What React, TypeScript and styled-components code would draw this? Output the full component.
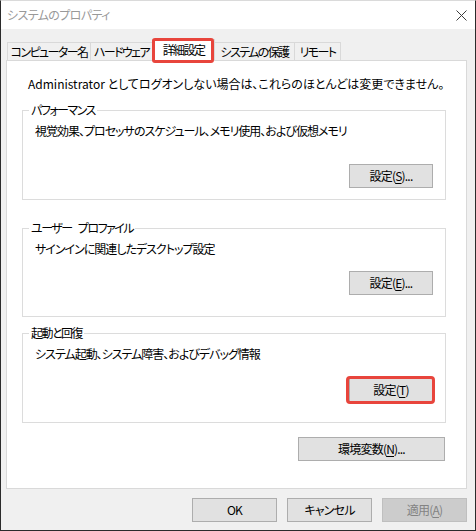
import React from "react";
import styled, { createGlobalStyle } from "styled-components";

const GlobalStyle = createGlobalStyle`
  html, body {
    margin: 0;
    padding: 0;
    background: #ffffff;
  }
  body {
    font-family: "Noto Sans CJK JP", "Noto Sans", sans-serif;
    font-size: 12px;
    font-feature-settings: "palt";
    color: #000;
  }
`;

const Window = styled.div`
  width: 476px;
  height: 531px;
  box-sizing: border-box;
  border: 1px solid #2b2b2b;
  border-top-color: #dadada;
  display: flex;
  flex-direction: column;
  background: #f0f0f0;
  overflow: hidden;
`;

const TitleBar = styled.div`
  height: 28px;
  flex: none;
  background: #ffffff;
  display: flex;
  align-items: center;
  justify-content: space-between;
  padding: 0 8px 0 6px;
  color: #999999;
  line-height: 16px;
  letter-spacing: -0.6px;
`;

const Body = styled.div`
  flex: 1;
  display: flex;
  flex-direction: column;
  padding: 10px 8px 0 5px;
`;

const TabRow = styled.div`
  height: 22px;
  flex: none;
  display: flex;
  align-items: flex-start;
  padding-left: 1px;
  position: relative;
  z-index: 1;
`;

const Tab = styled.div<{ $w: number; $active?: boolean }>`
  width: ${(p) => p.$w}px;
  box-sizing: border-box;
  margin-left: -1px;
  margin-top: ${(p) => (p.$active ? 0 : 3)}px;
  height: ${(p) => (p.$active ? 22 : 19)}px;
  border: 1px solid #d9d9d9;
  border-bottom: ${(p) => (p.$active ? "none" : "1px solid #d9d9d9")};
  background: ${(p) => (p.$active ? "#ffffff" : "#f0f0f0")};
  display: flex;
  align-items: center;
  justify-content: center;
  padding-bottom: ${(p) => (p.$active ? 2 : 0)}px;
  line-height: 16px;
  white-space: nowrap;
  letter-spacing: -1.6px;
  position: relative;
  &:first-child {
    margin-left: 0;
  }
`;

const Highlight = styled.div`
  position: absolute;
  left: -1px;
  right: 0px;
  top: -2px;
  bottom: -2px;
  border: 3px solid #e8453c;
  border-radius: 3px;
  pointer-events: none;
`;

const Panel = styled.div`
  height: 429px;
  flex: none;
  box-sizing: border-box;
  margin-top: -1px;
  background: #ffffff;
  border: 1px solid #d9d9d9;
  padding: 15px 20px 0 15px;
  display: flex;
  flex-direction: column;
`;

const Intro = styled.div`
  line-height: 16px;
  padding-left: 6px;
  white-space: nowrap;
`;

const Group = styled.div<{ $top: number; $gap: number; $bottom: number }>`
  position: relative;
  margin-top: ${(p) => p.$top}px;
  border: 1px solid #dcdcdc;
  padding: 12px 12px ${(p) => p.$bottom}px 12px;
  display: flex;
  flex-direction: column;

  > button {
    align-self: flex-end;
    margin-top: ${(p) => p.$gap}px;
  }
`;

const Legend = styled.div`
  position: absolute;
  left: 6px;
  top: -9px;
  padding: 0 2px;
  background: #ffffff;
  line-height: 16px;
  letter-spacing: -1.5px;
  word-spacing: 5px;
  white-space: pre;
`;

const Description = styled.div`
  line-height: 16px;
  letter-spacing: -1px;
  white-space: nowrap;
`;

const Button = styled.button<{ $w: number; $disabled?: boolean }>`
  width: ${(p) => p.$w}px;
  height: 24px;
  flex: none;
  box-sizing: border-box;
  position: relative;
  border: 1px solid ${(p) => (p.$disabled ? "#bfbfbf" : "#adadad")};
  background: ${(p) => (p.$disabled ? "#cccccc" : "#e1e1e1")};
  color: ${(p) => (p.$disabled ? "#838383" : "#000")};
  font: inherit;
  line-height: 16px;
  letter-spacing: -0.8px;
  white-space: nowrap;
  padding: 0;
  display: flex;
  align-items: center;
  justify-content: center;
  u {
    text-decoration: underline;
    text-underline-offset: 2px;
  }
`;

const ButtonHighlight = styled.div`
  position: absolute;
  left: -4px;
  right: -3px;
  top: -3px;
  bottom: -3px;
  border: 3px solid #e8453c;
  border-radius: 4px;
  pointer-events: none;
`;

const EnvRow = styled.div`
  display: flex;
  justify-content: flex-end;
  margin-top: 14px;
  margin-right: 1px;
`;

const Footer = styled.div`
  display: flex;
  justify-content: flex-end;
  gap: 10px;
  padding: 9px 0 0;
`;

function CloseIcon() {
  return (
    <svg width="11" height="11" viewBox="0 0 11 11">
      <path d="M0.5 0.5 L10.5 10.5 M10.5 0.5 L0.5 10.5" stroke="#3c3c3c" strokeWidth="1" fill="none" />
    </svg>
  );
}

export default function App() {
  return (
    <>
      <GlobalStyle />
      <Window>
        <TitleBar>
          <span>システムのプロパティ</span>
          <CloseIcon />
        </TitleBar>
        <Body>
          <TabRow>
            <Tab $w={84}>コンピューター名</Tab>
            <Tab $w={63}>ハードウェア</Tab>
            <Tab $w={63} $active>
              詳細設定
              <Highlight />
            </Tab>
            <Tab $w={81}>システムの保護</Tab>
            <Tab $w={47}>リモート</Tab>
          </TabRow>
          <Panel>
            <Intro>Administrator としてログオンしない場合は、これらのほとんどは変更できません。</Intro>

            <Group $top={18} $gap={25} $bottom={11}>
              <Legend>パフォーマンス</Legend>
              <Description>視覚効果、プロセッサのスケジュール、メモリ使用、および仮想メモリ</Description>
              <Button $w={84}>
                設定(<u>S</u>)...
              </Button>
            </Group>

            <Group $top={28} $gap={14} $bottom={21}>
              <Legend>ユーザー プロファイル</Legend>
              <Description>サインインに関連したデスクトップ設定</Description>
              <Button $w={84}>
                設定(<u>E</u>)...
              </Button>
            </Group>

            <Group $top={16} $gap={16} $bottom={20}>
              <Legend>起動と回復</Legend>
              <Description>システム起動、システム障害、およびデバッグ情報</Description>
              <Button $w={84}>
                設定(<u>T</u>)
                <ButtonHighlight />
              </Button>
            </Group>

            <EnvRow>
              <Button $w={147}>
                環境変数(<u>N</u>)...
              </Button>
            </EnvRow>
          </Panel>
          <Footer>
            <Button $w={85}>OK</Button>
            <Button $w={85}>キャンセル</Button>
            <Button $w={85} $disabled>
              適用(<u>A</u>)
            </Button>
          </Footer>
        </Body>
      </Window>
    </>
  );
}
